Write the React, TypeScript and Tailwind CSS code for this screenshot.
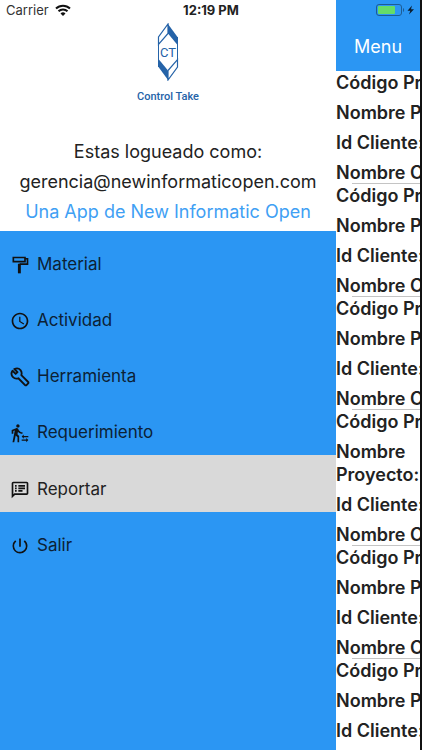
import type { ReactNode } from "react";
import {
  MdOutlineSpeakerNotes,
  MdPowerSettingsNew,
  MdSchedule,
  MdTransferWithinAStation,
} from "react-icons/md";

type MenuItem = {
  label: string;
  icon: ReactNode;
};

const MENU: MenuItem[] = [
  {
    label: "Material",
    icon: (
      // Rodillo de pintura
      <svg viewBox="0 0 24 24" fill="none" stroke="currentColor" strokeWidth="2" className="size-5">
        <path d="M4 3h14v5H4ZM18 4.500h3v6.500h-9.500" />
        <path d="M9.500 10.500H13V22H9.500Z" fill="currentColor" stroke="none" />
      </svg>
    ),
  },
  { label: "Actividad", icon: <MdSchedule className="size-5" /> },
  {
    label: "Herramienta",
    icon: (
      // Llave inglesa
      <svg
        viewBox="0 0 24 24"
        fill="none"
        stroke="currentColor"
        strokeWidth="2.2"
        strokeLinejoin="round"
        className="size-5"
      >
        <path d="M3 4.500 6.800 8.300 9 6.200 5.200 2.400C8 1.200 11 1.800 12.600 3.800c1.500 1.900 1.700 4 1 6l8.200 8.200a1.200 1.200 0 0 1 0 1.700l-2 2a1.200 1.200 0 0 1-1.700 0L10 13.500c-2.200.9-4.600.5-6.400-1.300C1.600 10.200 1.400 7 3 4.500Z" />
      </svg>
    ),
  },
  { label: "Requerimiento", icon: <MdTransferWithinAStation className="size-5" /> },
  { label: "Reportar", icon: <MdOutlineSpeakerNotes className="size-5" /> },
  { label: "Salir", icon: <MdPowerSettingsNew className="size-5" /> },
];

const PROJECTS = [false, false, false, true, false, false];

function Logo() {
  return (
    <svg viewBox="0 0 22 58" className="h-[58px] w-[22px]" aria-label="CT" role="img">
      <path d="M1.500 14v30M20.500 14v30" stroke="#2563a8" strokeWidth="1" />
      <path d="M11 1 20.500 14V22L11 10.500Z" fill="#2563a8" />
      <path d="M11 1v9.500L1.500 21.500V14Z" fill="#fff" stroke="#2563a8" strokeWidth="1.200" />
      <path d="M11 57 1.500 44V36L11 47.500Z" fill="#2563a8" />
      <path d="M11 57v-9.500L20.500 36.500V44Z" fill="#fff" stroke="#2563a8" strokeWidth="1.200" />
      <text
        x="11"
        y="34"
        textAnchor="middle"
        fontSize="13"
        fill="#2563a8"
        className="font-[Roboto,sans-serif]"
      >
        CT
      </text>
    </svg>
  );
}

function StatusBar() {
  return (
    <div className="absolute inset-x-0 top-0 z-10 grid h-5 grid-cols-3 items-center pl-1.5 pr-1 text-[13px] leading-5">
      <div className="flex items-center gap-1.5 text-[#333]">
        <span>Carrier</span>
        <svg viewBox="0 0 16 12" className="h-3 w-4" fill="none" stroke="#111" strokeWidth="2">
          <path d="M1 4.500a10 10 0 0 1 14 0M3.500 7.300a6.400 6.400 0 0 1 9 0" />
          <path d="M8 12 5.500 9.500a3.600 3.600 0 0 1 5 0Z" fill="#111" stroke="none" />
        </svg>
      </div>
      <span className="text-center font-bold text-[#222]">12:19 PM</span>
      <svg viewBox="0 0 40 12" className="h-3 w-10 justify-self-end" aria-label="Batería">
        <rect x="0.500" y="0.500" width="25" height="11" rx="2.500" fill="none" stroke="#1d5c94" />
        <rect x="2" y="2" width="17" height="8" rx="1" fill="#65dc67" />
        <path d="M27 4v4c1.500-.5 1.500-3.500 0-4Z" fill="#1d5c94" />
        <path d="M36 1.500 31.500 6.700h2.800L33 10.500l5-5.300h-3Z" fill="#0b1d2e" />
      </svg>
    </div>
  );
}

function Drawer() {
  return (
    <aside className="flex w-[336px] shrink-0 flex-col bg-[#2b96f3]">
      <header className="flex flex-col items-center bg-white pb-1 pt-[23px] text-center">
        <Logo />
        <span className="mt-1.5 font-[Roboto,sans-serif] text-[11px] font-medium leading-5 text-[#2563a8]">
          Control Take
        </span>
        <div className="mt-[30px] text-lg leading-[30px] text-[#222]">
          <p>Estas logueado como:</p>
          <p>gerencia@newinformaticopen.com</p>
          <p className="text-[#3fa0f4]">Una App de New Informatic Open</p>
        </div>
      </header>
      <nav aria-label="Menu principal">
        <ul>
          {MENU.map((item) => (
            <li key={item.label}>
              <button
                type="button"
                className={`flex w-full items-center gap-[7px] px-2.5 pb-1.5 pt-[18px] text-left text-[17px] ${
                  item.label === "Reportar" ? "h-[57px] bg-[#d9d9d9] text-[#222]" : "h-14 text-[#0c2135]"
                }`}
              >
                <span className="text-[#111]">{item.icon}</span>
                {item.label}
              </button>
            </li>
          ))}
        </ul>
      </nav>
    </aside>
  );
}

function ProjectCard({ wrap }: { wrap: boolean }) {
  return (
    <li>
      <div className="flex flex-col gap-[7px] whitespace-nowrap">
        <p>Código Proyecto:</p>
        <p>
          Nombre {wrap && <br />}
          Proyecto:
        </p>
        <p>Id Cliente:</p>
        <p>Nombre Cliente:</p>
      </div>
      <hr className="-mt-px ml-4 border-[#c4c4c4]" />
    </li>
  );
}

export default function App() {
  return (
    <div className="relative flex h-screen overflow-hidden border-r-2 border-[#111] bg-white font-[Inter,sans-serif]">
      <StatusBar />
      <Drawer />
      <main className="min-w-0 flex-1 overflow-hidden">
        <div className="flex h-[71px] items-end bg-[#2b96f3] px-[18px] pb-2.5">
          <button type="button" className="text-lg text-white">
            Menu
          </button>
        </div>
        <ul className="text-lg font-semibold leading-[23px] text-[#222]">
          {PROJECTS.map((wrap, i) => (
            <ProjectCard key={i} wrap={wrap} />
          ))}
        </ul>
      </main>
    </div>
  );
}
